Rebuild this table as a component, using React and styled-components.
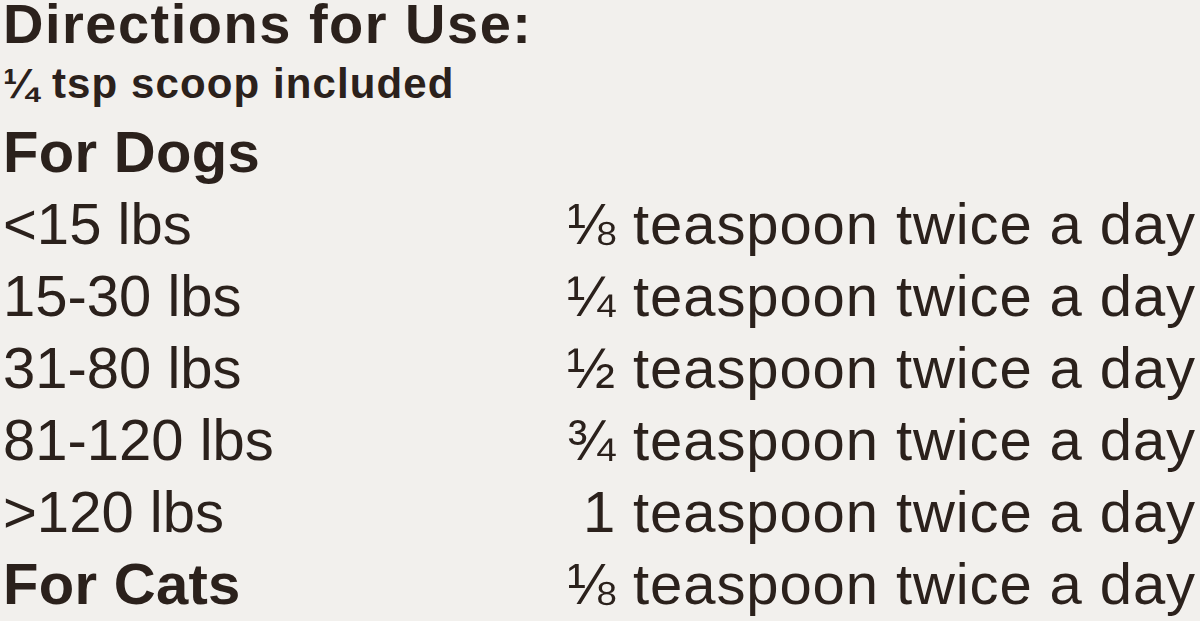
import React from 'react';
import styled, { createGlobalStyle } from 'styled-components';

const GlobalStyle = createGlobalStyle`
  html, body {
    margin: 0;
    padding: 0;
    background: #f2f0ed;
  }
  body {
    font-family: "Liberation Sans", Arial, Helvetica, sans-serif;
    color: #2b211c;
  }
`;

const dosages = [
  { weight: '<15 lbs', amount: '⅛' },
  { weight: '15-30 lbs', amount: '¼' },
  { weight: '31-80 lbs', amount: '½' },
  { weight: '81-120 lbs', amount: '¾' },
  { weight: '>120 lbs', amount: '1' },
];

const App = () => {
  return (
    <>
      <GlobalStyle />
      <Panel>
        <Title>Directions for Use:</Title>
        <Note>¼ tsp scoop included</Note>
        <DoseTable>
          <Heading>For Dogs</Heading>
          <span />
          {dosages.map((d) => (
            <React.Fragment key={d.weight}>
              <Weight>{d.weight}</Weight>
              <Amount>{d.amount} teaspoon twice a day</Amount>
            </React.Fragment>
          ))}
          <Heading>For Cats</Heading>
          <Amount>⅛ teaspoon twice a day</Amount>
        </DoseTable>
      </Panel>
    </>
  );
};

const Panel = styled.main`
  width: 1200px;
  height: 621px;
  overflow: hidden;
  padding: 0 4px 0 3px;
  box-sizing: border-box;
  display: flex;
  flex-direction: column;
`;

const Title = styled.h1`
  margin: 0;
  font-size: 56px;
  font-weight: 700;
  line-height: 48px;
  letter-spacing: 1.5px;
`;

const Note = styled.p`
  margin: 13px 0 0;
  font-size: 42px;
  font-weight: 700;
  line-height: 46px;
  letter-spacing: 1.1px;
`;

const DoseTable = styled.div`
  margin-top: 9px;
  display: grid;
  grid-template-columns: 1fr auto;
  grid-auto-rows: 72px;
  align-items: center;
`;

const Heading = styled.h2`
  margin: 0;
  font-size: 58px;
  font-weight: 700;
  line-height: 72px;
  letter-spacing: 0.3px;
`;

const Weight = styled.span`
  font-size: 58px;
  line-height: 72px;
`;

const Amount = styled.span`
  font-size: 58px;
  line-height: 72px;
  text-align: right;
  letter-spacing: 0.9px;
`;

export default App;
